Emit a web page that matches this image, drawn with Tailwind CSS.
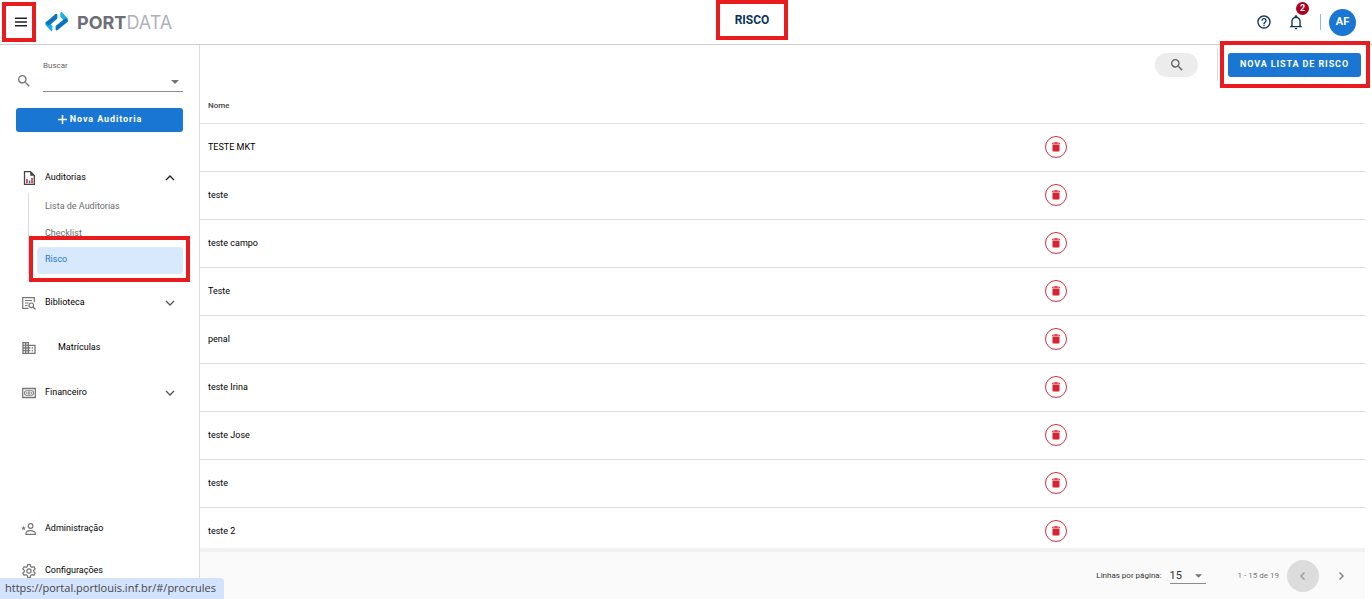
<!DOCTYPE html>
<html lang="pt-BR">
<head>
    <meta charset="UTF-8">
    <meta name="viewport" content="width=device-width, initial-scale=1.0">
    <title>Portdata - Risco</title>
    <script src="https://cdn.jsdelivr.net/npm/@tailwindcss/browser@4"></script>
</head>
<body class="flex h-screen flex-col overflow-hidden bg-white font-['Roboto',sans-serif] text-[9px] text-black">

    <!-- Header -->
    <header class="flex h-[45px] shrink-0 items-center justify-between border-b border-[#cfcfcf] pr-4">
        <div class="flex grow basis-[148px] items-center">
            <button aria-label="Menu" class="relative ml-[13px] flex h-10 w-4 items-center justify-center">
                <svg class="h-4 w-4" viewBox="0 0 16 16" fill="none" stroke="#222" stroke-width="1.5"><path d="M2 4.2h12M2 8h12M2 11.8h12"/></svg>
                <span class="pointer-events-none absolute inset-y-0 -right-[7px] -left-[11px] border-4 border-[#e81c1f]"></span>
            </button>
            <a href="#" class="ml-4 flex items-center gap-2 text-[18px]">
                <svg class="h-[22px] w-6" viewBox="0 0 24 22">
                    <path d="M.6 11.300 3 9.800 7.300 15.300V19.600Q7.200 21 6 20L.8 14.200Q-.4 12.500.6 11.300Z" fill="#12b0ee"/>
                    <path d="M12.400 4V7.400L4.600 14.200Q3 14.600 1.800 13.200L.8 11.200 10.300 3.200Q12 2.200 12.400 4Z" fill="#0b72bd"/>
                    <path d="M15.400 5.600V2Q15.800.4 17.300 1.400L22.800 7.800Q23.700 9 22.800 10.400L20.200 11.200Z" fill="#12b0ee"/>
                    <path d="M19 8.200Q20.600 7 22 8.300L23 10.400 13 18.800Q11 20.200 10.600 18.400V15Z" fill="#0b72bd"/>
                </svg>
                <span class="font-['Inter',sans-serif] text-[#b0b1bb]"><b class="text-[#6d6e78]">PORT</b>DATA</span>
            </a>
        </div>
        <h1 class="relative mb-1 flex h-10 w-[72px] shrink-0 items-center justify-center text-[12px] font-bold text-[#0b3558]">RISCO
            <span class="pointer-events-none absolute inset-0 border-4 border-[#e81c1f]"></span>
        </h1>
        <div class="flex grow basis-0 items-center justify-end text-[#0b3558]">
            <button aria-label="Ajuda">
                <svg class="h-4 w-4" viewBox="0 0 24 24" fill="currentColor"><path d="M11 18h2v-2h-2v2zm1-16C6.480 2 2 6.480 2 12s4.480 10 10 10 10-4.480 10-10S17.520 2 12 2zm0 18c-4.410 0-8-3.590-8-8s3.590-8 8-8 8 3.590 8 8-3.590 8-8 8zm0-14c-2.210 0-4 1.790-4 4h2c0-1.100.9-2 2-2s2 .9 2 2c0 2-3 1.750-3 5h2c0-2.250 3-2.500 3-5 0-2.210-1.790-4-4-4z"/></svg>
            </button>
            <button aria-label="Notificações" class="relative ml-4">
                <svg class="h-4 w-4" viewBox="0 0 24 24" fill="currentColor"><path d="M10 21h4c0 1.100-.9 2-2 2s-2-.9-2-2zm11-2v1H3v-1l2-2v-6c0-3.100 2-5.800 5-6.700V4c0-1.100.9-2 2-2s2 .9 2 2v.3c3 .9 5 3.600 5 6.700v6l2 2zm-4-8c0-2.800-2.200-5-5-5s-5 2.200-5 5v7h10v-7z"/></svg>
                <span class="absolute -top-3 left-2 flex h-[13px] w-[13px] items-center justify-center rounded-full bg-[#b00020] text-[9px] font-bold text-white">2</span>
            </button>
            <span class="mx-2 ml-4 h-4 w-px bg-[#8dbce9]"></span>
            <button class="flex h-[27px] w-[27px] items-center justify-center rounded-full bg-[#1976d2] text-[11px] font-bold text-white">AF</button>
        </div>
    </header>

    <div class="flex min-h-0 flex-1">
        <!-- Sidebar -->
        <aside class="flex w-[200px] shrink-0 flex-col border-r border-[#dcdcdc] pr-4 pb-[7px] pl-4">
            <div class="flex items-end pt-4">
                <svg class="mb-[3px] h-4 w-4 shrink-0 text-[#757575]" viewBox="0 0 24 24" fill="currentColor"><path d="M15.500 14h-.79l-.28-.27A6.470 6.470 0 0 0 16 9.500 6.500 6.500 0 1 0 9.500 16c1.610 0 3.090-.59 4.230-1.570l.27.28v.79l5 4.990L20.490 19l-4.990-5zm-6 0C7.010 14 5 11.990 5 9.500S7.010 5 9.500 5 14 7.010 14 9.500 11.990 14 9.500 14z"/></svg>
                <div class="relative ml-[11px] flex-1">
                    <label for="buscar" class="block text-[8px] leading-[10px] text-[#666]">Buscar</label>
                    <select id="buscar" class="block h-[21px] w-full appearance-none border-b border-[#8c8c8c] bg-transparent"><option></option></select>
                    <svg class="pointer-events-none absolute right-1 bottom-2 h-1 w-2" viewBox="0 0 8 4" fill="#757575"><path d="M0 0h8L4 4z"/></svg>
                </div>
            </div>
            <button class="mt-4 flex h-6 shrink-0 items-center justify-center gap-[2px] rounded-[3px] bg-[#1976d2] text-[9px] font-bold tracking-widest text-white">
                <svg class="mb-0.5 h-[11px] w-[11px]" viewBox="0 0 11 11" stroke="#fff" stroke-width="1.500"><path d="M5.500 1v9M1 5.500h9"/></svg>
                Nova Auditoria
            </button>

            <nav class="mt-[31px] flex flex-1 flex-col">
                <button class="flex h-[30px] items-center gap-2 pr-2 pl-[5px]">
                    <svg class="h-4 w-4" viewBox="0 0 16 16" fill="none"><path d="M3.500 1.700h6L13.300 5.500v8.800H3.500z" stroke="#444" stroke-width="1.300"/><path d="M9.200 1.500v4.300h4.300z" fill="#444"/><path d="M5.900 9v4.300" stroke="#c62828" stroke-width="1.500"/><path d="M8.500 10.500v2.800" stroke="#1565c0" stroke-width="1.500"/><path d="M11 8v5.300" stroke="#c62828" stroke-width="1.500"/></svg>
                    <span class="flex-1 text-left">Auditorias</span>
                    <svg class="h-[10px] w-[10px]" viewBox="0 0 10 10" fill="none" stroke="#222" stroke-width="1.300"><path d="M1 7l4-4 4 4"/></svg>
                </button>
                <div class="ml-3 flex flex-col border-l border-[#dcdcdc] pl-2 text-[#6b6b6b]">
                    <a href="#" class="flex h-[27px] items-center pl-2">Lista de Auditorias</a>
                    <a href="#" class="flex h-[27px] items-center pl-2">Checklist</a>
                    <a href="#/procrules" class="relative flex h-[27px] items-center rounded-[4px] bg-[#d9e9fd] pb-0.5 pl-2 text-[#1976d2]">Risco
                        <span class="pointer-events-none absolute -right-[7px] -left-2 -top-[11px] -bottom-2 border-4 border-[#e81c1f]"></span>
                    </a>
                </div>
                <button class="mt-1.5 flex h-[45px] items-center gap-2 pr-2 pl-[5px]">
                    <svg class="h-4 w-4" viewBox="0 0 16 16" fill="none" stroke="#777" stroke-width="1.200"><path d="M7.500 13.400H1.700V2.600h11.600v4.600M4 5.500h7M4 8h3.500M4 10.500h2.500"/><circle cx="10.300" cy="10.300" r="2.300"/><path d="M12 12l2.500 2.500"/></svg>
                    <span class="flex-1 text-left">Biblioteca</span>
                    <svg class="h-[10px] w-[10px]" viewBox="0 0 10 10" fill="none" stroke="#555" stroke-width="1.300"><path d="M1 3l4 4 4-4"/></svg>
                </button>
                <a href="#" class="flex h-[45px] items-center gap-[21px] pl-[5px]">
                    <svg class="h-4 w-4 text-[#777]" viewBox="0 0 24 24" fill="currentColor"><path d="M12 7V3H2v18h20V7H12zM6 19H4v-2h2v2zm0-4H4v-2h2v2zm0-4H4V9h2v2zm0-4H4V5h2v2zm4 12H8v-2h2v2zm0-4H8v-2h2v2zm0-4H8V9h2v2zm0-4H8V5h2v2zm10 12h-8v-2h2v-2h-2v-2h2v-2h-2V9h8v10zm-2-8h-2v2h2v-2zm0 4h-2v2h2v-2z"/></svg>
                    Matrículas
                </a>
                <button class="flex h-[45px] items-center gap-2 pr-2 pl-[5px]">
                    <svg class="h-4 w-4" viewBox="0 0 16 16" fill="none" stroke="#777"><path d="M1.700 3.500h12.600v9H1.700z" stroke-width="1.300"/><rect x="3.600" y="5.800" width="8.800" height="4.400" rx="1.600" stroke-width="1.100"/><path d="M5.700 7v2M7.200 7h1.600v2H7.200zM10.400 7v2" stroke-width=".8"/></svg>
                    <span class="flex-1 text-left">Financeiro</span>
                    <svg class="h-[10px] w-[10px]" viewBox="0 0 10 10" fill="none" stroke="#555" stroke-width="1.300"><path d="M1 3l4 4 4-4"/></svg>
                </button>
                <a href="#" class="mt-auto flex h-[42px] items-center gap-2 pl-[5px]">
                    <svg class="h-4 w-4" viewBox="0 0 16 16" fill="none" stroke="#777" stroke-width="1.200"><circle cx="9.600" cy="5" r="2.300"/><path d="M5 13.400v-1.200c0-1.600 2.500-2.500 4.600-2.500s4.700.9 4.700 2.500v1.200z"/><path d="M2.600 4.800l.7 1.600 1.700.1-1.300 1.100.5 1.700-1.600-1-1.500 1 .4-1.700L.2 6.500l1.700-.1z" fill="#777" stroke="none"/></svg>
                    Administração
                </a>
                <a href="#" class="flex h-[42px] items-center gap-2 pl-[5px]">
                    <svg class="h-4 w-4" viewBox="0 0 24 24" fill="none" stroke="#777" stroke-width="1.800"><circle cx="12" cy="12" r="3.200"/><path d="M10 2.500h4l.6 2.900 1.900 1.100 2.800-.9 2 3.400-2.200 2v2l2.200 2-2 3.400-2.800-.9-1.900 1.100-.6 2.900h-4l-.6-2.900-1.900-1.100-2.800.9-2-3.400 2.200-2v-2l-2.200-2 2-3.400 2.800.9 1.900-1.100z"/></svg>
                    Configurações
                </a>
            </nav>
        </aside>

        <!-- Main content -->
        <main class="mr-[7px] flex min-w-0 flex-1 flex-col">
            <div class="flex h-10 shrink-0 items-center justify-end">
                <button aria-label="Pesquisar" class="flex h-6 w-[43px] items-center justify-center rounded-full bg-[#ececec] text-[#616161]">
                    <svg class="h-4 w-4" viewBox="0 0 24 24" fill="currentColor"><path d="M15.500 14h-.79l-.28-.27A6.470 6.470 0 0 0 16 9.500 6.500 6.500 0 1 0 9.500 16c1.610 0 3.090-.59 4.230-1.570l.27.28v.79l5 4.990L20.490 19l-4.990-5zm-6 0C7.010 14 5 11.990 5 9.500S7.010 5 9.500 5 14 7.010 14 9.500 11.990 14 9.500 14z"/></svg>
                </button>
                <span class="mr-[10px] ml-[19px] h-8 w-px bg-[#dcdcdc]"></span>
                <div class="relative mr-1">
                    <button class="flex h-6 w-[133px] items-center justify-center rounded-[3px] bg-[#1976d2] text-[9px] font-bold tracking-widest text-white">NOVA LISTA DE RISCO</button>
                    <span class="pointer-events-none absolute -right-[9px] -left-2 -top-3 -bottom-[11px] border-4 border-[#e81c1f]"></span>
                </div>
            </div>

            <div class="min-h-0 flex-1 overflow-hidden">
                <table class="w-full table-fixed border-separate border-spacing-0">
                    <thead>
                        <tr>
                            <th class="h-[39px] w-[72%] border-b border-[#e4e4e4] pt-1 pl-2 text-left text-[8px] font-medium text-[#444]">Nome</th>
                            <th class="border-b border-[#e4e4e4]"></th>
                        </tr>
                    </thead>
                    <tbody id="lista"></tbody>
                </table>
            </div>

            <footer class="flex h-[51px] shrink-0 items-center justify-end border-t-4 border-[#f1f1f1] bg-[#fafafa] pr-2">
                <label for="linhas" class="text-[8px] text-[#333]">Linhas por página:</label>
                <div class="relative ml-2">
                    <select id="linhas" class="block h-4 w-9 appearance-none border-b border-[#8c8c8c] bg-transparent text-[11px] text-[#333]"><option>15</option></select>
                    <svg class="pointer-events-none absolute right-1 bottom-1.5 h-1 w-[7px]" viewBox="0 0 8 4" fill="#757575"><path d="M0 0h8L4 4z"/></svg>
                </div>
                <span class="ml-8 text-[8px] text-[#777]">1 - 15 de 19</span>
                <button aria-label="Página anterior" class="ml-2 flex h-8 w-8 items-center justify-center rounded-full bg-[#dcdcdc]">
                    <svg class="h-[10px] w-[10px]" viewBox="0 0 10 10" fill="none" stroke="#999" stroke-width="1.400"><path d="M6.500 1.500L3 5l3.500 3.500"/></svg>
                </button>
                <button aria-label="Próxima página" class="ml-1.5 flex h-8 w-8 items-center justify-center">
                    <svg class="h-[10px] w-[10px]" viewBox="0 0 10 10" fill="none" stroke="#888" stroke-width="1.500"><path d="M3.500 1.500L7 5 3.500 8.500"/></svg>
                </button>
            </footer>
        </main>
    </div>

    <!-- Link status -->
    <div class="fixed bottom-0 left-0 flex h-[21px] items-center rounded-tr-[4px] bg-[#d3e3fd] pr-2 pl-[5px] font-['Open_Sans',sans-serif] text-[11px] text-[#474747]">https://portal.portlouis.inf.br/#/procrules</div>

    <script>
        const listas = ["TESTE MKT", "teste", "teste campo", "Teste", "penal", "teste Irina", "teste Jose", "teste", "teste 2"];

        document.querySelector("#lista").innerHTML = listas.map(nome => `
            <tr>
                <td class="h-12 border-b border-[#dcdcdc] pl-2">${nome}</td>
                <td class="border-b border-[#dcdcdc] pb-0.5 pl-1.5">
                    <button aria-label="Excluir ${nome}" class="flex h-[22px] w-[22px] items-center justify-center rounded-full border border-[#d32f3a]">
                        <svg class="h-3 w-3" viewBox="0 0 12 12" fill="#d9232e"><path d="M2.500 3.500h7v6.300a.8.8 0 0 1-.8.8H3.300a.8.8 0 0 1-.8-.8zM2 1.700h2.500l.6-.6h1.800l.6.6H10v1H2z"/></svg>
                    </button>
                </td>
            </tr>`).join("");
    </script>
</body>
</html>
